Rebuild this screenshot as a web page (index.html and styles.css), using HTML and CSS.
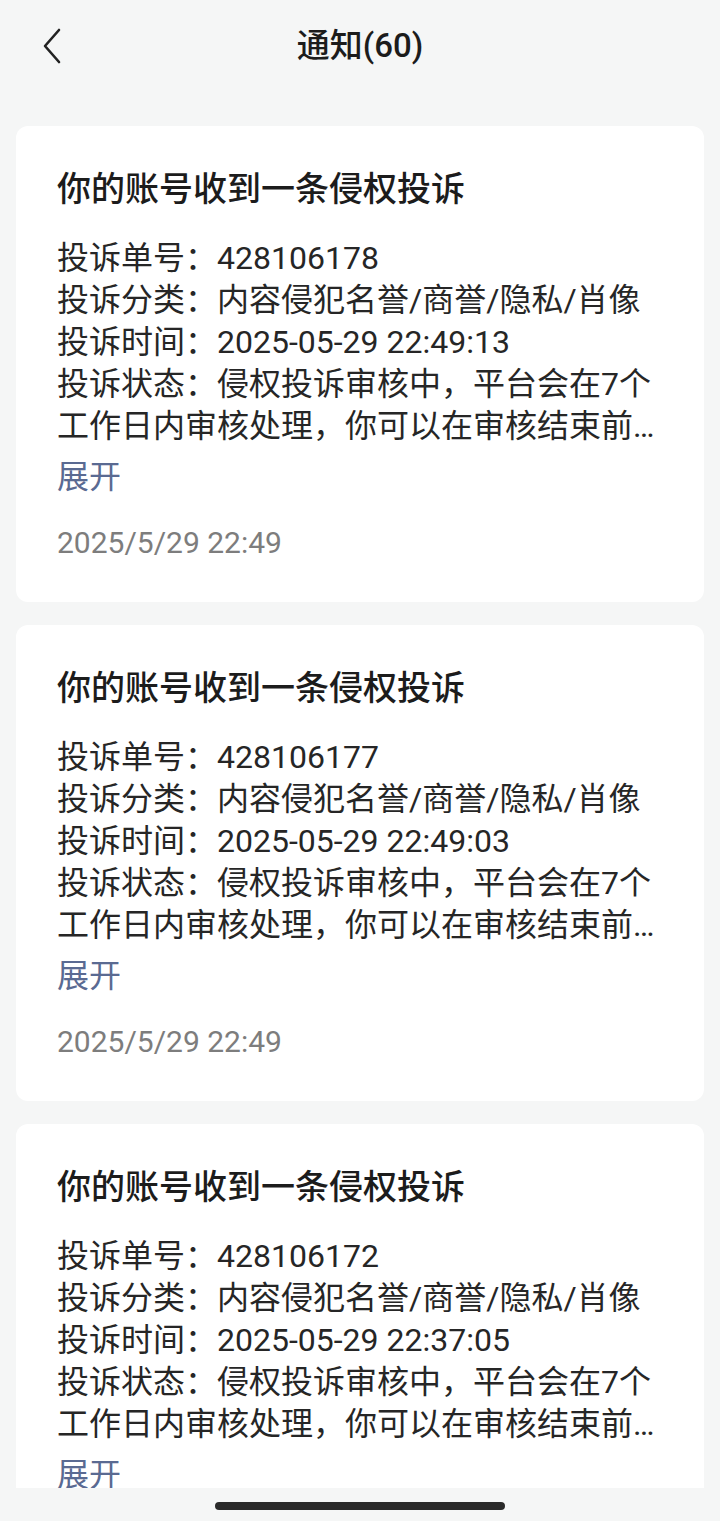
FILE: index.html
```html
<!DOCTYPE html>
<html lang="zh-CN">
<head>
<meta charset="utf-8">
<title>通知(60)</title>
<link rel="stylesheet" href="styles.css">
</head>
<body>
<header class="topbar">
  <button class="back" aria-label="返回">
    <svg width="24" height="38" viewBox="0 0 24 38"><path d="M19 3 L5 19 L19 35" fill="none" stroke="#222" stroke-width="2.6" stroke-linecap="round" stroke-linejoin="round"/></svg>
  </button>
  <h1 class="title">通知(60)</h1>
</header>

<main class="list">
  <article class="card">
    <h2 class="card-title">你的账号收到一条侵权投诉</h2>
    <div class="card-body">
      <p>投诉单号：428106178</p>
      <p>投诉分类：内容侵犯名誉/商誉/隐私/肖像</p>
      <p>投诉时间：2025-05-29 22:49:13</p>
      <p>投诉状态：侵权投诉审核中，平台会在7个工作日内审核处理，你可以在审核结束前…</p>
    </div>
    <div class="expand">展开</div>
    <div class="stamp">2025/5/29 22:49</div>
  </article>

  <article class="card">
    <h2 class="card-title">你的账号收到一条侵权投诉</h2>
    <div class="card-body">
      <p>投诉单号：428106177</p>
      <p>投诉分类：内容侵犯名誉/商誉/隐私/肖像</p>
      <p>投诉时间：2025-05-29 22:49:03</p>
      <p>投诉状态：侵权投诉审核中，平台会在7个工作日内审核处理，你可以在审核结束前…</p>
    </div>
    <div class="expand">展开</div>
    <div class="stamp">2025/5/29 22:49</div>
  </article>

  <article class="card">
    <h2 class="card-title">你的账号收到一条侵权投诉</h2>
    <div class="card-body">
      <p>投诉单号：428106172</p>
      <p>投诉分类：内容侵犯名誉/商誉/隐私/肖像</p>
      <p>投诉时间：2025-05-29 22:37:05</p>
      <p>投诉状态：侵权投诉审核中，平台会在7个工作日内审核处理，你可以在审核结束前…</p>
    </div>
    <div class="expand">展开</div>
    <div class="stamp">2025/5/29 22:37</div>
  </article>
</main>

<div class="navbar"><span class="indicator"></span></div>
</body>
</html>
```

FILE: styles.css
```css
* { box-sizing: border-box; }

html, body {
  margin: 0;
  padding: 0;
  background: #f5f6f6;
  font-family: "Roboto", "Noto Sans CJK SC", sans-serif;
  color: #222;
}

.topbar {
  height: 92px;
  display: flex;
  align-items: center;
  justify-content: center;
  position: relative;
}

.back {
  position: absolute;
  left: 38px;
  top: 26px;
  width: 28px;
  height: 40px;
  padding: 0;
  border: 0;
  background: transparent;
  display: flex;
  align-items: center;
  justify-content: center;
}

.title {
  margin: 0;
  font-size: 33px;
  font-weight: 500;
  color: #1c1c1c;
  line-height: 44px;
}

.list {
  padding: 34px 16px 0;
  display: flex;
  flex-direction: column;
  gap: 23px;
}

.card {
  background: #fff;
  border-radius: 12px;
  padding: 39px 41px 39px 41px;
  display: flex;
  flex-direction: column;
}

.card-title {
  margin: 0 0 24px;
  font-size: 34px;
  font-weight: 500;
  line-height: 48px;
  color: #1c1c1c;
}

.card-body {
  font-size: 32px;
  line-height: 42px;
  color: #262626;
}

.card-body p {
  margin: 0;
}

.expand {
  margin-top: 9px;
  font-size: 32px;
  line-height: 42px;
  color: #5a6a92;
}

.stamp {
  margin-top: 25px;
  font-size: 30px;
  line-height: 40px;
  color: #7d7d7d;
}

.navbar {
  position: fixed;
  left: 0;
  right: 0;
  bottom: 0;
  height: 33px;
  background: #f5f6f6;
  display: flex;
  justify-content: center;
  align-items: center;
}

.indicator {
  width: 290px;
  height: 8px;
  border-radius: 4px;
  background: #2a2a2a;
  margin-top: 2px;
}
```
